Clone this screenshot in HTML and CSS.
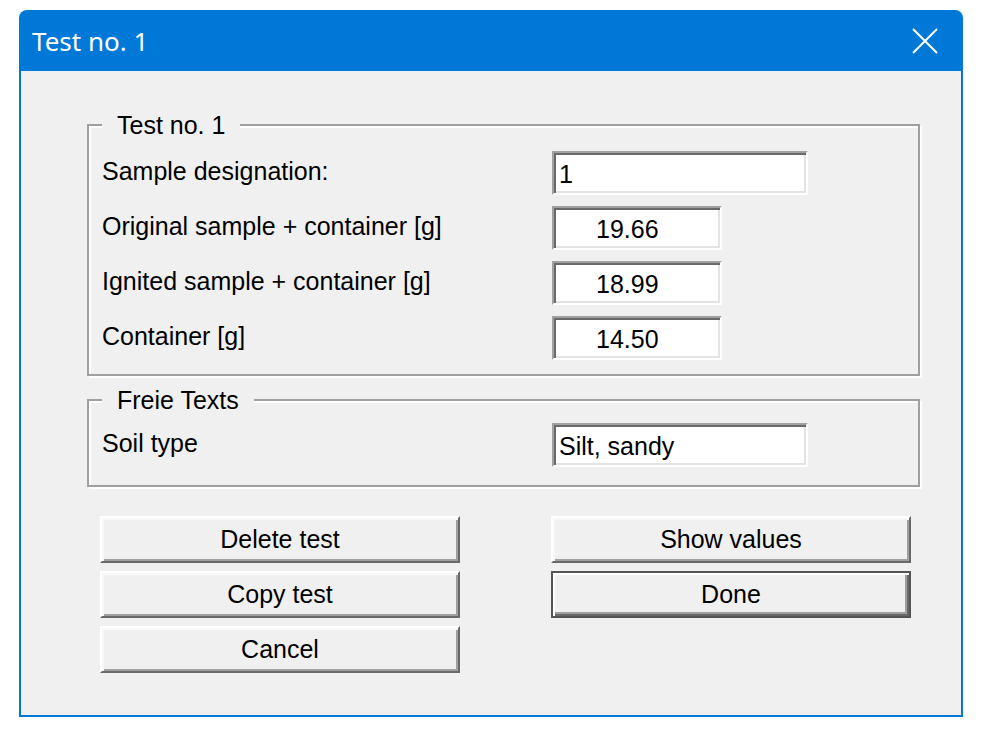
FILE: index.html
```html
<!DOCTYPE html>
<html lang="en">
<head>
    <meta charset="UTF-8">
    <title>Test no. 1</title>
    <link rel="stylesheet" href="styles.css">
</head>
<body>
<div class="window">
    <div class="titlebar">
        <span class="title">Test no. 1</span>
        <svg class="close" width="26" height="26" viewBox="0 0 26 26">
            <path d="M1 1 L25 25 M25 1 L1 25" stroke="#fff" stroke-width="2" fill="none"/>
        </svg>
    </div>
    <div class="client">
        <fieldset class="group group-test">
            <legend>Test no. 1</legend>
            <div class="row">
                <label>Sample designation:</label>
                <input class="field wide" value="1" readonly>
            </div>
            <div class="row">
                <label>Original sample + container [g]</label>
                <input class="field num" value="19.66" readonly>
            </div>
            <div class="row">
                <label>Ignited sample + container [g]</label>
                <input class="field num" value="18.99" readonly>
            </div>
            <div class="row">
                <label>Container [g]</label>
                <input class="field num" value="14.50" readonly>
            </div>
        </fieldset>

        <fieldset class="group group-texts">
            <legend>Freie Texts</legend>
            <div class="row">
                <label>Soil type</label>
                <input class="field wide" value="Silt, sandy" readonly>
            </div>
        </fieldset>

        <div class="buttons">
            <button class="btn">Delete test</button>
            <button class="btn">Show values</button>
            <button class="btn">Copy test</button>
            <button class="btn btn-default">Done</button>
            <button class="btn">Cancel</button>
        </div>
    </div>
</div>
</body>
</html>
```

FILE: styles.css
```css
html, body {
    margin: 0;
    padding: 0;
    background: #fff;
}

body {
    font-family: "Liberation Sans", Arial, sans-serif;
    font-size: 25px;
    color: #000;
}

.window {
    width: 944px;
    margin: 10px 0 0 19px;
    padding: 0 2px 2px;
    box-sizing: border-box;
    background: #0078d7;
    border-radius: 8px 8px 0 0;
}

.titlebar {
    height: 61px;
    display: flex;
    align-items: center;
    justify-content: space-between;
    padding: 0 23px 0 11px;
}

.title {
    font-family: "Noto Sans", sans-serif;
    font-size: 26px;
    color: #fff;
}

.client {
    height: 644px;
    background: #f0f0f0;
    overflow: hidden;
}

/* etched group frame */
.group {
    width: 833px;
    box-sizing: border-box;
    margin: 0 0 0 66px;
    padding: 12px 0 3px 13px;
    border: 2px solid #a0a0a0;
    box-shadow: 2px 2px 0 #fff, inset 2px 2px 0 #fff;
    min-inline-size: 0;
}

.group legend {
    padding: 0 15px;
    line-height: 28px;
    background: #f0f0f0;
}

.group-test {
    margin-top: 40px;
}

.group-texts {
    margin-top: 10px;
    padding-top: 9px;
    padding-bottom: 7px;
}

.row {
    display: flex;
    align-items: flex-start;
    height: 55px;
}

.row label {
    width: 450px;
    line-height: 40px;
}

/* sunken edit box */
.field {
    height: 44px;
    box-sizing: border-box;
    margin: 0;
    border: 2px solid;
    border-color: #a0a0a0 #fff #fff #a0a0a0;
    box-shadow: inset 2px 2px 0 #696969, inset -2px -2px 0 #e3e3e3;
    background: #fff;
    font: inherit;
    color: #000;
    outline: none;
}

.field.wide {
    width: 256px;
    padding: 2px 0 0 5px;
}

.field.num {
    width: 170px;
    padding: 2px 0 0 42px;
}

.buttons {
    display: grid;
    grid-template-columns: 360px 360px;
    column-gap: 91px;
    row-gap: 8px;
    margin: 29px 0 0 79px;
}

/* raised push button */
.btn {
    height: 47px;
    margin: 0;
    padding: 0;
    border: 2px solid;
    border-color: #fff #696969 #696969 #fff;
    box-shadow: inset 2px 2px 0 #f8f8f8, inset -2px -2px 0 #a0a0a0;
    background: #f0f0f0;
    font: inherit;
    color: #000;
    cursor: pointer;
}

.btn-default {
    border: 2px solid #555;
    box-shadow: inset 2px 2px 0 #fff, inset -2px -2px 0 #696969, inset -4px -4px 0 #a0a0a0;
}
```
